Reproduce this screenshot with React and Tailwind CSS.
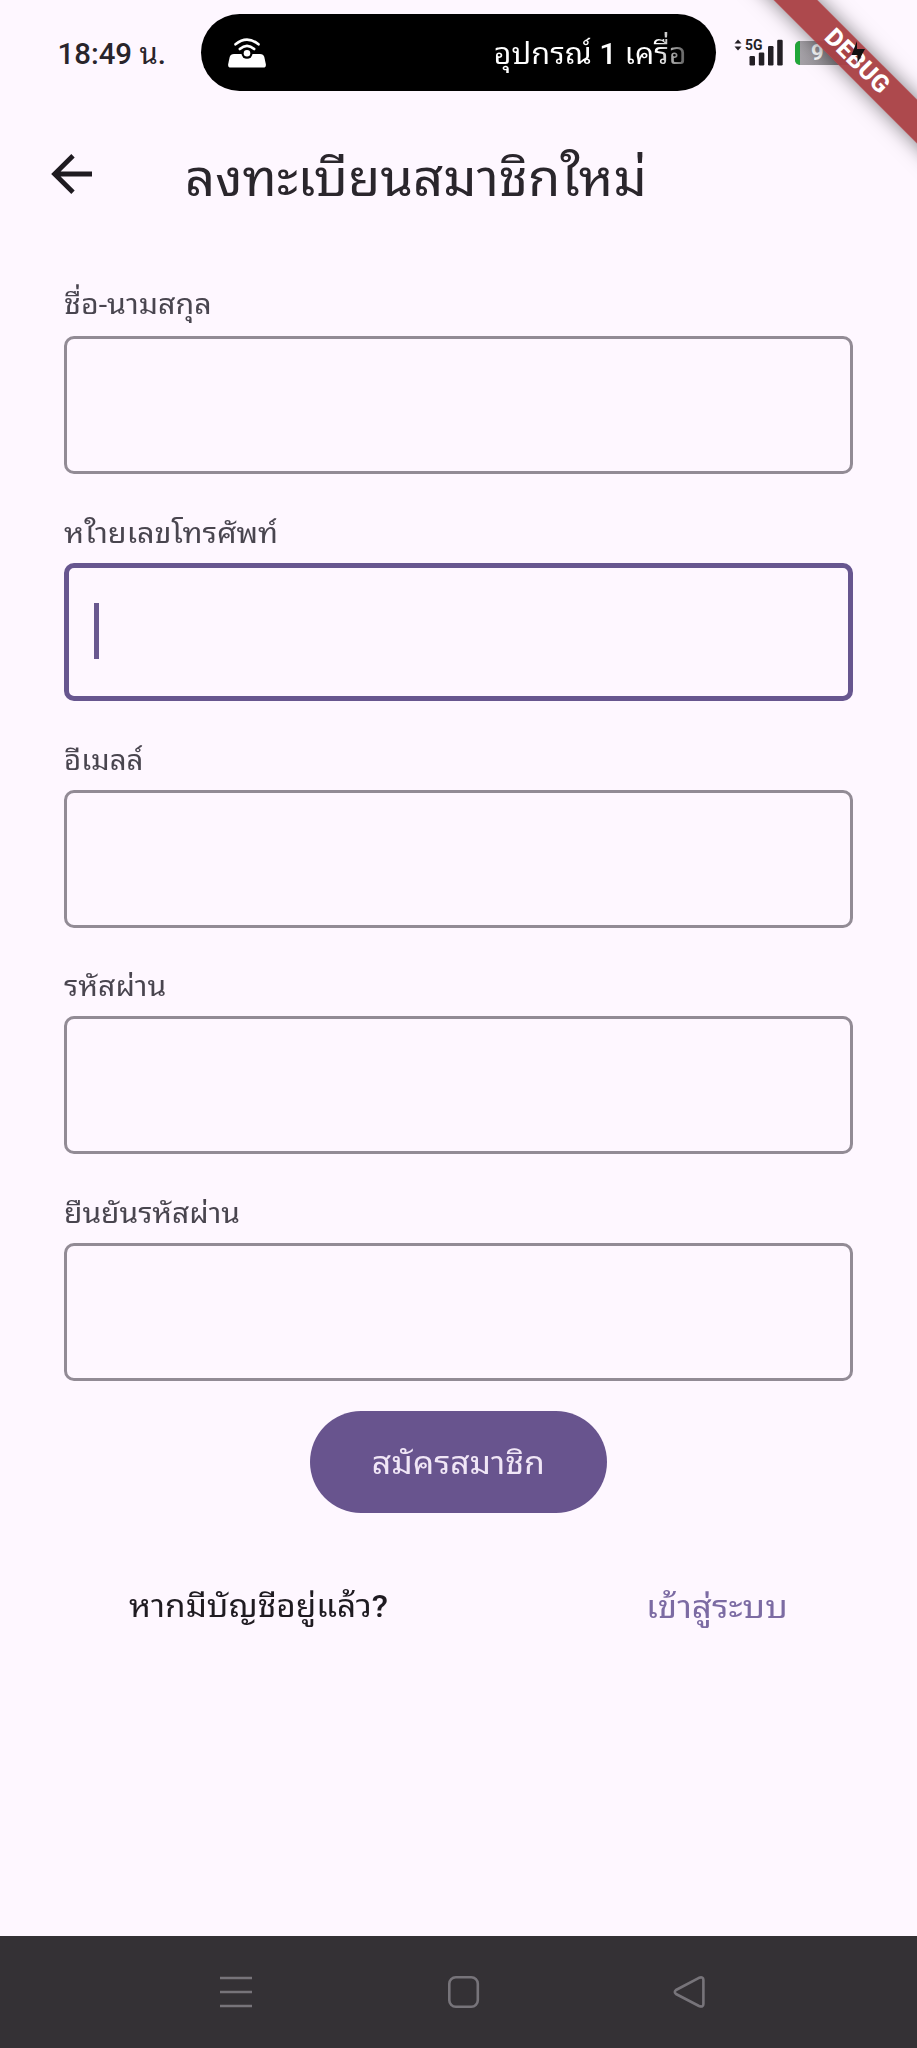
import React from 'react';

const FIELDS = [
  { label: 'ชื่อ-นามสกุล', stretch: 'scale-x-[1.085]', top: 'pt-[9px]' },
  { label: 'หใายเลขโทรศัพท์', stretch: 'scale-x-[1.095]', top: 'pt-[11px]', focused: true },
  { label: 'อีเมลล์', stretch: 'scale-x-[1.05]', top: 'pt-[11px]' },
  { label: 'รหัสผ่าน', stretch: 'scale-x-[1.075]', top: 'pt-[11px]' },
  { label: 'ยืนยันรหัสผ่าน', stretch: 'scale-x-[1.07]', top: 'pt-[11px]' },
];

function HotspotIcon() {
  return (
    <svg className="block h-[30px] w-[38px]" viewBox="0 0 38 30" fill="none">
      <path d="M6 16h26q3.500 0 4.300 3l1.500 7q.5 3.500-2.500 3.500H2.700q-3 0-2.500-3.500l1.500-7q.8-3 4.300-3z" fill="#fff" />
      <circle cx="19" cy="15.200" r="5.600" fill="#000" />
      <circle cx="19" cy="15.200" r="3.300" fill="#fff" />
      <path d="M7.500 6.300q11.500-9.500 23 0M11.800 11q7.200-6.400 14.400 0" stroke="#fff" strokeWidth="2.600" strokeLinecap="round" />
    </svg>
  );
}

function SignalIcon() {
  return (
    <svg className="block h-[27px] w-[49px]" viewBox="0 0 49 27" fill="#231f25">
      <path d="M4 .5l3.500 4h-7zM4 11.500l3.500-4h-7z" />
      <text x="11" y="11.200" fontFamily="Roboto" fontWeight="700" fontSize="15" textLength="17.500" lengthAdjust="spacingAndGlyphs">5G</text>
      <rect x="15.500" y="17" width="5.500" height="9.500" rx="1.200" />
      <rect x="24.800" y="13.500" width="5.500" height="13" rx="1.200" />
      <rect x="34" y="7" width="5.500" height="19.500" rx="1.200" />
      <rect x="43.200" y=".8" width="5.500" height="25.700" rx="1.200" />
    </svg>
  );
}

function StatusBar() {
  return (
    <div className="flex h-[105px] items-start">
      <div className="w-[201px] pt-[35px] pl-[57.500px] text-[29.400px] leading-[38px] font-medium whitespace-nowrap text-[#29252b]">
        18:49 <span className="font-normal">น</span>.
      </div>
      <div className="mt-[14px] flex h-[77px] w-[515px] items-center justify-between rounded-full bg-black pr-[29px] pl-[27px]">
        <HotspotIcon />
        <div className="origin-right scale-x-[1.024] bg-linear-to-r from-white from-85% to-[#555] bg-clip-text pt-[2px] text-[30px] leading-[64px] whitespace-nowrap text-transparent">
          อุปกรณ์ <span className="font-medium">1</span> เครื่อ
        </div>
      </div>
      <div className="mt-[39px] ml-[18px]">
        <SignalIcon />
      </div>
      <div className="mt-[41px] ml-[12px] flex h-[24px] w-[58px] items-center overflow-hidden rounded-[5px] bg-linear-to-r from-[#aaa6ac] to-[#7e7b80]">
        <div className="h-full w-[5px] bg-[#22a83a]" />
        <div className="ml-[11px] text-[22px] leading-[24px] font-bold text-white">9</div>
      </div>
    </div>
  );
}

function DebugBanner() {
  return (
    <div className="absolute top-0 right-0 h-[200px] w-[200px] overflow-hidden">
      <div className="absolute top-[46px] left-[-10px] flex h-[31px] w-[300px] rotate-45 items-center justify-center bg-[#a93f43]/95 text-[24.500px] leading-none font-extrabold tracking-[0.400px] text-white shadow-[0_0_20px_rgba(0,0,0,0.5)]">
        DEBUG
      </div>
      <svg className="absolute top-[41px] left-[134px] h-[23px] w-[14px]" viewBox="0 0 14 23">
        <path d="M6 0v8h8L6.500 22v-8H.5z" fill="#111" />
      </svg>
    </div>
  );
}

function Field({ label, stretch, top, focused }) {
  return (
    <div>
      <div className={`h-[60px] text-[28px] leading-[40px] whitespace-nowrap text-[#49454f] ${top}`}>
        <span className={`inline-block origin-left ${stretch}`}>{label}</span>
      </div>
      <div
        className={
          focused
            ? 'flex h-[138px] items-start rounded-[10px] border-[5px] border-[#67568f] pt-[35px] pl-[25px]'
            : 'h-[138px] rounded-[10px] border-[3px] border-[#928b95]'
        }
      >
        {focused && <div className="h-[56px] w-[5px] bg-[#69588f]" />}
      </div>
    </div>
  );
}

export default function App() {
  return (
    <div className="relative flex h-[2048px] w-[917px] flex-col overflow-hidden bg-[#fef7ff] font-[Roboto,'Noto_Sans_Thai_Looped','Noto_Sans_Thai','Noto_Sans',sans-serif]">
      <StatusBar />
      <header className="flex h-[146px] items-start">
        <svg className="mt-[48.500px] ml-[51px] block h-[40px] w-[41px]" viewBox="0 0 41 40" fill="none" stroke="#1f1b21" strokeWidth="4.800">
          <path d="M41 20H4M22 1.800L3.600 20 22 38.200" />
        </svg>
        <h1 className="mt-[39px] ml-[93px] origin-left scale-x-[1.03] text-[51px] leading-[70px] whitespace-nowrap text-[#2a262c]">
          ลงทะเบียนสมาชิกใหม่
        </h1>
      </header>
      <main className="flex flex-col px-[64px] pt-[25px]">
        <div className="flex flex-col gap-[28.75px]">
          {FIELDS.map((f) => (
            <Field key={f.label} {...f} />
          ))}
        </div>
        <button className="mt-[30px] flex h-[102px] w-[297px] items-center justify-center self-center rounded-full bg-[#68548e] pt-[4px] text-[31px] leading-[44px] whitespace-nowrap text-[#f0e6f6]">
          <span className="scale-x-[1.09]">สมัครสมาชิก</span>
        </button>
        <div className="mt-[70px] flex items-center justify-between px-[65px] text-[31px] leading-[46px] whitespace-nowrap text-[#1f1b21]">
          <span className="origin-left scale-x-[1.077]">
            หากมีบัญชีอยู่แล้ว<span className="font-medium">?</span>
          </span>
          <a className="origin-right scale-x-[1.127] pt-[2px] text-[#7c6ba3]">เข้าสู่ระบบ</a>
        </div>
      </main>
      <nav className="mt-auto flex h-[112px] bg-[#343135] pt-[40px]">
        <svg className="ml-[220px] block h-[32px] w-[33px]" viewBox="0 0 33 32" stroke="#77747a" strokeWidth="2.600">
          <path d="M0 2h32M0 16h32M0 30h32" />
        </svg>
        <svg className="ml-[194px] block h-[32px] w-[33px]" viewBox="0 0 33 32" fill="none" stroke="#77747a" strokeWidth="2.600">
          <rect x="2.300" y="1.300" width="28.500" height="29.400" rx="6.500" />
        </svg>
        <svg className="ml-[193px] block h-[32px] w-[33px]" viewBox="0 0 33 32" fill="none" stroke="#77747a" strokeWidth="2.600" strokeLinejoin="round">
          <path d="M3 14L26 1.800Q30.400 .4 30.400 4V28Q30.400 31.600 26 30L3 18Q.6 16 3 14Z" />
        </svg>
      </nav>
      <DebugBanner />
    </div>
  );
}
